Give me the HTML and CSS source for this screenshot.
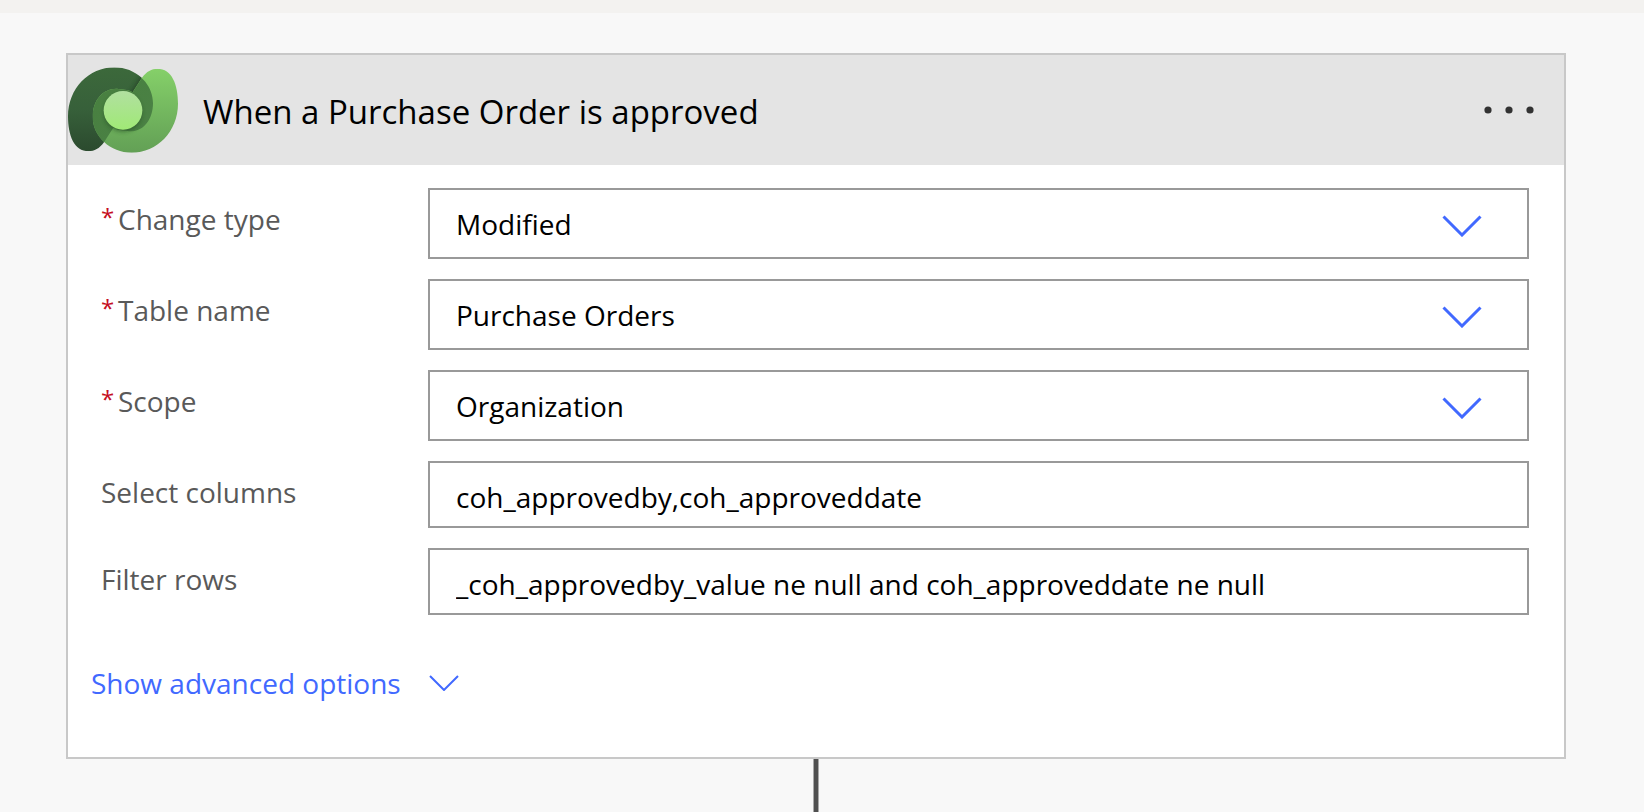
FILE: index.html
```html
<!DOCTYPE html>
<html lang="en">
<head>
<meta charset="utf-8">
<title>When a Purchase Order is approved</title>
<link rel="stylesheet" href="styles.css">
</head>
<body>
<div class="toolbar-edge"></div>
<main class="canvas">
  <section class="card">
    <header class="card-header">
      <svg class="logo" viewBox="54 44 330 330" aria-hidden="true">
        <defs>
          <linearGradient id="dark" x1="0" y1="0" x2="0" y2="1">
            <stop offset="0" stop-color="#3c693b"/><stop offset="0.5" stop-color="#37603a"/><stop offset="1" stop-color="#2b4a2e"/>
          </linearGradient>
          <linearGradient id="light" x1="0" y1="0" x2="0" y2="1">
            <stop offset="0" stop-color="#85d069"/><stop offset="1" stop-color="#629f55"/>
          </linearGradient>
          <linearGradient id="core" x1="0" y1="0" x2="0" y2="1">
            <stop offset="0" stop-color="#b1e0a0"/><stop offset="1" stop-color="#a0e976"/>
          </linearGradient>
          <linearGradient id="mid" x1="0" y1="0" x2="1" y2="1">
            <stop offset="0" stop-color="#48803f"/><stop offset="1" stop-color="#4b8146"/>
          </linearGradient>
          <clipPath id="darkClip"><path d="M116 333C72 333 54 285 54 228C54 145 117 81 193 81C257 81 309 130 309 188C309 236 282 275 238 273L203 268L190 262L162 306C148 325 133 333 116 333Z"/></clipPath>
          <clipPath id="lightClip"><path d="M322 85C366 85 384 133 384 190C384 273 321 337 245 337C181 337 128 288 128 230C128 182 156 145 200 145L235 150L248 156L276 112C290 93 305 85 322 85Z"/></clipPath>
          <filter id="soft" x="-40%" y="-40%" width="180%" height="180%"><feGaussianBlur stdDeviation="7"/></filter>
        </defs>
        <g clip-path="url(#darkClip)">
          <rect x="54" y="81" width="256" height="252" fill="url(#dark)"/>
          <path d="M240 168L282 104" stroke="#203c24" stroke-width="12" opacity="0.7" filter="url(#soft)"/>
        </g>
        <g clip-path="url(#lightClip)">
          <rect x="120" y="85" width="270" height="256" fill="url(#light)"/>
          <g clip-path="url(#darkClip)"><rect x="120" y="81" width="200" height="256" fill="url(#mid)"/></g>
          <circle cx="219" cy="218" r="56" fill="#234a24" opacity="0.6" filter="url(#soft)"/>
        </g>
        <circle cx="219" cy="210" r="58" fill="url(#core)"/>
      </svg>
      <h1 class="card-title">When a Purchase Order is approved</h1>
      <button class="more" type="button" aria-label="More options">
        <svg viewBox="0 0 50 8" width="50" height="8" aria-hidden="true"><circle cx="4" cy="4" r="3.6"/><circle cx="25" cy="4" r="3.6"/><circle cx="46" cy="4" r="3.6"/></svg>
      </button>
    </header>
    <form class="card-body">
      <div class="row">
        <label class="label" for="change"><span class="star">*</span>Change type</label>
        <div class="picker">
          <select class="control" id="change"><option>Modified</option></select>
          <svg class="chevron" viewBox="0 0 40 22" aria-hidden="true"><path d="M1.5 1.5L20 20L38.500 1.5"/></svg>
        </div>
      </div>
      <div class="row">
        <label class="label" for="table"><span class="star">*</span>Table name</label>
        <div class="picker">
          <select class="control" id="table"><option>Purchase Orders</option></select>
          <svg class="chevron" viewBox="0 0 40 22" aria-hidden="true"><path d="M1.5 1.5L20 20L38.500 1.5"/></svg>
        </div>
      </div>
      <div class="row">
        <label class="label" for="scope"><span class="star">*</span>Scope</label>
        <div class="picker">
          <select class="control" id="scope"><option>Organization</option></select>
          <svg class="chevron" viewBox="0 0 40 22" aria-hidden="true"><path d="M1.5 1.5L20 20L38.500 1.5"/></svg>
        </div>
      </div>
      <div class="row">
        <label class="label" for="columns">Select columns</label>
        <input class="control text" id="columns" type="text" value="coh_approvedby,coh_approveddate">
      </div>
      <div class="row">
        <label class="label" for="filter">Filter rows</label>
        <input class="control text" id="filter" type="text" value="_coh_approvedby_value ne null and coh_approveddate ne null">
      </div>
      <button class="advanced" type="button">Show advanced options
        <svg viewBox="0 0 30 16" width="30" height="16" aria-hidden="true"><path d="M1 1L15 15L29 1"/></svg>
      </button>
    </form>
  </section>
  <div class="connector"></div>
</main>
</body>
</html>
```
FILE: styles.css
```css
* { box-sizing: border-box; }
body {
  margin: 0;
  min-height: 100vh;
  display: flex;
  flex-direction: column;
  background: #f8f8f8;
  font-family: "Segoe UI", "Open Sans", "Noto Sans", sans-serif;
  font-size: 28px;
  line-height: 40px;
  color: #000;
}
.toolbar-edge { height: 13px; background: #f3f2f0; }
.canvas {
  flex: 1;
  display: flex;
  flex-direction: column;
  padding: 40px 78px 0 66px;
}
.card { border: 2px solid #c8c8c8; background: #fff; }
.card-header {
  display: flex;
  align-items: center;
  min-height: 110px;
  padding-right: 24px;
  background: #e4e4e4;
}
.logo { width: 110px; height: 110px; }
.card-title {
  flex: 1;
  margin: 0;
  padding: 4px 0 0 25px;
  font-size: 33px;
  font-weight: 400;
}
.more {
  display: flex;
  padding: 20px 6px;
  border: 0;
  background: none;
  fill: #323232;
}
.card-body {
  display: flex;
  flex-direction: column;
  gap: 20px;
  padding: 23px 35px 54px 33px;
}
.row {
  display: grid;
  grid-template-columns: 327px 1fr;
  align-items: start;
}
.label { display: flex; padding-top: 11px; color: #595959; }
.star { width: 17px; font-size: 24px; line-height: 36px; color: #c50f1f; }
.picker { display: grid; align-items: center; }
.picker > * { grid-area: 1 / 1; }
.control {
  width: 100%;
  height: 71px;
  margin: 0;
  padding: 0 26px;
  border: 2px solid #999;
  border-radius: 0;
  background: #fff;
  font: inherit;
  color: inherit;
  appearance: none;
}
.text { height: 67px; padding-top: 4px; }
.chevron {
  justify-self: end;
  width: 40px;
  height: 22px;
  margin: 5px 47px 0 0;
  pointer-events: none;
}
.chevron, .advanced svg { fill: none; stroke: #4169ff; stroke-width: 3; }
.advanced {
  align-self: flex-start;
  display: flex;
  align-items: center;
  gap: 28px;
  margin: 28px 0 0 -10px;
  padding: 0;
  border: 0;
  background: none;
  font: inherit;
  color: #4169ff;
}
.advanced svg { stroke-width: 2; }
.connector {
  flex: 1;
  align-self: center;
  width: 6px;
  border: solid #a8a8a8;
  border-width: 0 1px;
  background: #505050;
}
```
